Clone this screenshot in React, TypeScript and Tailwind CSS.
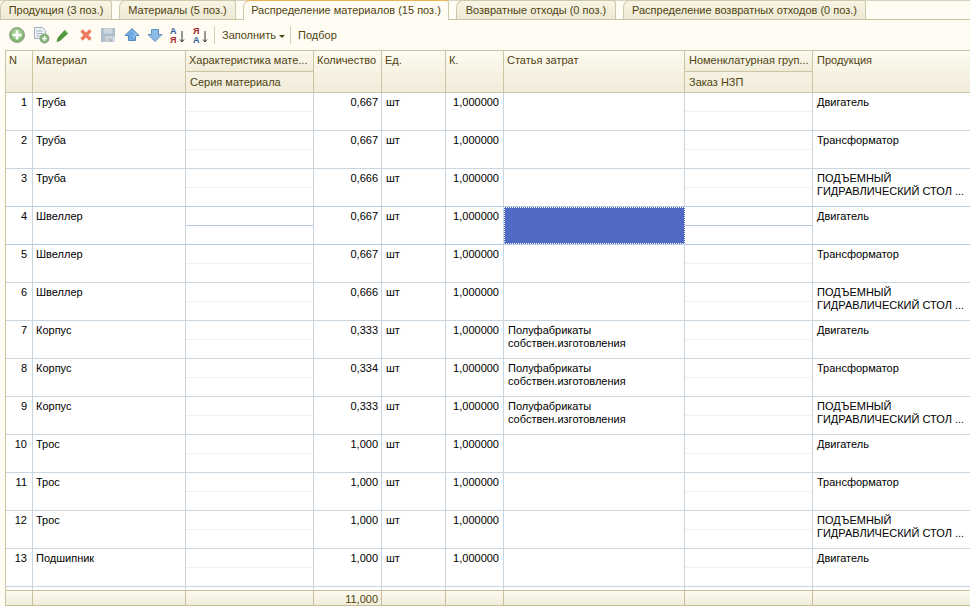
import React from "react";

const font = { fontFamily: '"Liberation Sans", Arial, sans-serif' };

const tabs = [
  { label: "Продукция (3 поз.)", w: "w-[112px]" },
  { label: "Материалы (5 поз.)", w: "w-[117px]" },
  { label: "Распределение материалов (15 поз.)", w: "w-[206px]", active: true },
  { label: "Возвратные отходы (0 поз.)", w: "w-[160px]" },
  { label: "Распределение возвратных отходов (0 поз.)", w: "w-[243px]" },
];

const LONG = ["ПОДЪЕМНЫЙ", "ГИДРАВЛИЧЕСКИЙ СТОЛ ..."];
const COST = ["Полуфабрикаты", "собствен.изготовления"];

const rows = [
  { n: 1, m: "Труба", q: "0,667", p: ["Двигатель"] },
  { n: 2, m: "Труба", q: "0,667", p: ["Трансформатор"] },
  { n: 3, m: "Труба", q: "0,666", p: LONG },
  { n: 4, m: "Швеллер", q: "0,667", p: ["Двигатель"], sel: true },
  { n: 5, m: "Швеллер", q: "0,667", p: ["Трансформатор"] },
  { n: 6, m: "Швеллер", q: "0,666", p: LONG },
  { n: 7, m: "Корпус", q: "0,333", p: ["Двигатель"], c: COST },
  { n: 8, m: "Корпус", q: "0,334", p: ["Трансформатор"], c: COST },
  { n: 9, m: "Корпус", q: "0,333", p: LONG, c: COST },
  { n: 10, m: "Трос", q: "1,000", p: ["Двигатель"] },
  { n: 11, m: "Трос", q: "1,000", p: ["Трансформатор"] },
  { n: 12, m: "Трос", q: "1,000", p: LONG },
  { n: 13, m: "Подшипник", q: "1,000", p: ["Двигатель"] },
];

const GRID = "grid grid-cols-[27px_153px_128px_68px_64px_58px_181px_128px_1fr]";

const Icons = () => (
  <div className="flex items-center h-[18px]">
    <svg width="18" height="18" viewBox="0 0 18 18" className="ml-[8px]">
      <circle cx="9" cy="9" r="7.5" fill="#7fb56f" stroke="#9a9f94" />
      <circle cx="9" cy="8" r="5.5" fill="#a0cc90" />
      <path d="M9 4.5v9M4.5 9h9" stroke="#fff" strokeWidth="2.6" />
    </svg>
    <svg width="18" height="18" viewBox="0 0 18 18" className="ml-[6px]">
      <path d="M2.5 1.5h8l3 3v8h-11z" fill="#eef2f6" stroke="#9fb0c0" />
      <path d="M4.5 5h6M4.5 7.5h6M4.5 10h4" stroke="#9fb0c0" />
      <circle cx="12.5" cy="12.5" r="4.5" fill="#7fb56f" stroke="#8f9f88" />
      <path d="M12.5 10v5M10 12.5h5" stroke="#fff" strokeWidth="1.6" />
    </svg>
    <svg width="16" height="16" viewBox="0 0 16 16" className="ml-[5px]">
      <path d="M3 11l7-8 3 3-8 7.5-3 1z" fill="#4f9a3c" stroke="#2f7a2a" strokeWidth="0.7" />
      <path d="M10 3l3 3" stroke="#bfe0a8" strokeWidth="1.4" />
    </svg>
    <svg width="16" height="16" viewBox="0 0 16 16" className="ml-[7px]">
      <path d="M3.5 3.5l9 9M12.5 3.5l-9 9" stroke="#ec7a5e" strokeWidth="3.2" />
    </svg>
    <svg width="16" height="16" viewBox="0 0 16 16" className="ml-[6px]">
      <path d="M1 1h14v14H1z" fill="#aebcc9" />
      <path d="M3.5 1.5h9v5h-9z" fill="#cfd8e0" />
      <path d="M5 9.5h10V15H5z" fill="#d7dde2" />
      <text x="5.5" y="14.5" fontSize="5.5" fill="#8e9aa5" style={font}>ОК</text>
    </svg>
    <svg width="16" height="16" viewBox="0 0 16 16" className="ml-[8px]">
      <path d="M8 1.5L15 8.5h-3.5v5h-7v-5H1z" fill="#6ba9e0" stroke="#3f75ad" strokeWidth="0.8" />
      <path d="M8 3.5L12.5 8h-2.5v3" fill="none" stroke="#bcdcf5" strokeWidth="0.8" />
    </svg>
    <svg width="16" height="16" viewBox="0 0 16 16" className="ml-[7px]">
      <path d="M8 14.5L1 7.5h3.5v-5h7v5H15z" fill="#8cbbe8" stroke="#4a7fb5" strokeWidth="0.8" />
    </svg>
    <svg width="16" height="18" viewBox="0 0 16 18" className="ml-[7px]">
      <text x="0" y="8" fontSize="9" fontWeight="700" fill="#2a5d9c" style={font}>A</text>
      <text x="0" y="17" fontSize="9" fontWeight="700" fill="#a52a2a" style={font}>Я</text>
      <path d="M12 5v11M10 13.5l2 2.5 2-2.5" fill="none" stroke="#333" />
    </svg>
    <svg width="16" height="18" viewBox="0 0 16 18" className="ml-[7px]">
      <text x="0" y="8" fontSize="9" fontWeight="700" fill="#a52a2a" style={font}>Я</text>
      <text x="0" y="17" fontSize="9" fontWeight="700" fill="#2a5d9c" style={font}>A</text>
      <path d="M12 5v11M10 13.5l2 2.5 2-2.5" fill="none" stroke="#333" />
    </svg>
  </div>
);

const HeadCell = ({ children, right }: { children?: React.ReactNode; right?: boolean }) => (
  <div className={`border-r border-[#cbc5a3] pl-[3px] pt-[3px] truncate ${right ? "text-right" : ""}`}>{children}</div>
);

export default function App() {
  return (
    <div style={font} className="w-[970px] h-[606px] overflow-hidden bg-[#fffcf3] text-[11px] leading-[13px] text-black">
      {/* вкладки */}
      <div className="h-[20px] flex items-end gap-[7px] border-t border-[#d6d2bd] border-b border-b-[#c9c3a2] pl-0 bg-[#fffcf3]">
        {tabs.map((t) => (
          <div
            key={t.label}
            className={`${t.w} h-[19px] shrink-0 flex items-center justify-center whitespace-nowrap rounded-tl-[7px] rounded-tr-[3px] border border-b-0 border-[#cfc9ab] text-[#4f4310] ${
              t.active
                ? "bg-[#fffcf3] border-t-[#e8b558] text-[#2f2a10] h-[20px] -mb-px"
                : "bg-gradient-to-b from-[#f8f5e6] to-[#ede8d2]"
            }`}
          >
            {t.label}
          </div>
        ))}
      </div>

      {/* панель */}
      <div className="h-[30px] flex items-center text-[#4f4310]">
        <Icons />
        <div className="w-px h-[18px] bg-[#d4cfb4] ml-[5px]" />
        <span className="ml-[7px]">Заполнить</span>
        <span className="ml-[3px] mt-[2px] w-0 h-0 border-x-[3px] border-x-transparent border-t-[3px] border-t-[#4f4310]" />
        <div className="w-px h-[18px] bg-[#d4cfb4] ml-[5px]" />
        <span className="ml-[7px]">Подбор</span>
      </div>

      {/* таблица */}
      <div className="ml-[5px] border-l border-[#c9c3a2]">
        <div className={`${GRID} h-[43px] border-y border-[#cbc5a3] bg-gradient-to-b from-[#fdfaf0] to-[#f1ecd9] text-[#4f4310]`}>
          <HeadCell>N</HeadCell>
          <HeadCell>Материал</HeadCell>
          <div className="border-r border-[#cbc5a3] flex flex-col">
            <div className="h-[21px] border-b border-[#cbc5a3] pl-[3px] pt-[3px] truncate bg-gradient-to-b from-[#fdfaf0] to-[#f1ecd9]">Характеристика мате...</div>
            <div className="pl-[4px] pt-[4px]">Серия материала</div>
          </div>
          <HeadCell>Количество</HeadCell>
          <HeadCell>Ед.</HeadCell>
          <HeadCell>К.</HeadCell>
          <HeadCell>Статья затрат</HeadCell>
          <div className="border-r border-[#cbc5a3] flex flex-col">
            <div className="h-[21px] border-b border-[#cbc5a3] pl-[4px] pt-[3px] truncate bg-gradient-to-b from-[#fdfaf0] to-[#f1ecd9]">Номенклатурная груп...</div>
            <div className="pl-[4px] pt-[4px]">Заказ НЗП</div>
          </div>
          <div className="pl-[4px] pt-[3px]">Продукция</div>
        </div>

        <div className="bg-white">
          {rows.map((r) => {
            const next = r.n === 3;
            const line = r.sel || next ? "border-[#b5cde6]" : "border-[#c9d6e0]";
            const cell = "border-r border-[#c9d6e0] pt-[3px]";
            const split = r.sel ? "border-[#b9c6dc]" : "border-[#f0f0f0]";
            return (
              <div key={r.n} className={`${GRID} h-[38px] border-b ${line}`}>
                <div className={`${cell} text-right pr-[5px]`}>{r.n}</div>
                <div className={`${cell} pl-[3px]`}>{r.m}</div>
                <div className={`border-r border-[#c9d6e0] flex flex-col`}>
                  <div className={`h-[19px] border-b ${split}`} />
                </div>
                <div className={`${cell} text-right pr-[3px]`}>{r.q}</div>
                <div className={`${cell} pl-[4px]`}>шт</div>
                <div className={`${cell} text-right pr-[4px]`}>1,000000</div>
                {r.sel ? (
                  <div className="bg-[#5069c2] border border-dotted border-white" />
                ) : (
                  <div className={`${cell} pl-[4px] whitespace-nowrap`}>
                    {r.c?.map((x) => <div key={x}>{x}</div>)}
                  </div>
                )}
                <div className={`border-r border-[#c9d6e0] flex flex-col`}>
                  <div className={`h-[19px] border-b ${split}`} />
                </div>
                <div className="pl-[4px] pt-[3px] whitespace-nowrap">
                  {r.p.map((x) => <div key={x}>{x}</div>)}
                </div>
              </div>
            );
          })}
          <div className={`${GRID} h-[3px]`}>
            {[0, 1, 2, 3, 4, 5, 6, 7].map((i) => <div key={i} className="border-r border-[#c9d6e0]" />)}
          </div>
        </div>

        <div className={`${GRID} h-[16px] border-y border-[#c7bf98] bg-gradient-to-b from-[#fdfaf0] to-[#f1ecd9] text-[#4f4310]`}>
          <div className="border-r border-[#c7bf98]" />
          <div className="border-r border-[#c7bf98]" />
          <div className="border-r border-[#c7bf98]" />
          <div className="border-r border-[#c7bf98] text-right pr-[3px] pt-[2px]">11,000</div>
          <div className="border-r border-[#c7bf98]" />
          <div className="border-r border-[#c7bf98]" />
          <div className="border-r border-[#c7bf98]" />
          <div className="border-r border-[#c7bf98]" />
        </div>
      </div>
    </div>
  );
}
